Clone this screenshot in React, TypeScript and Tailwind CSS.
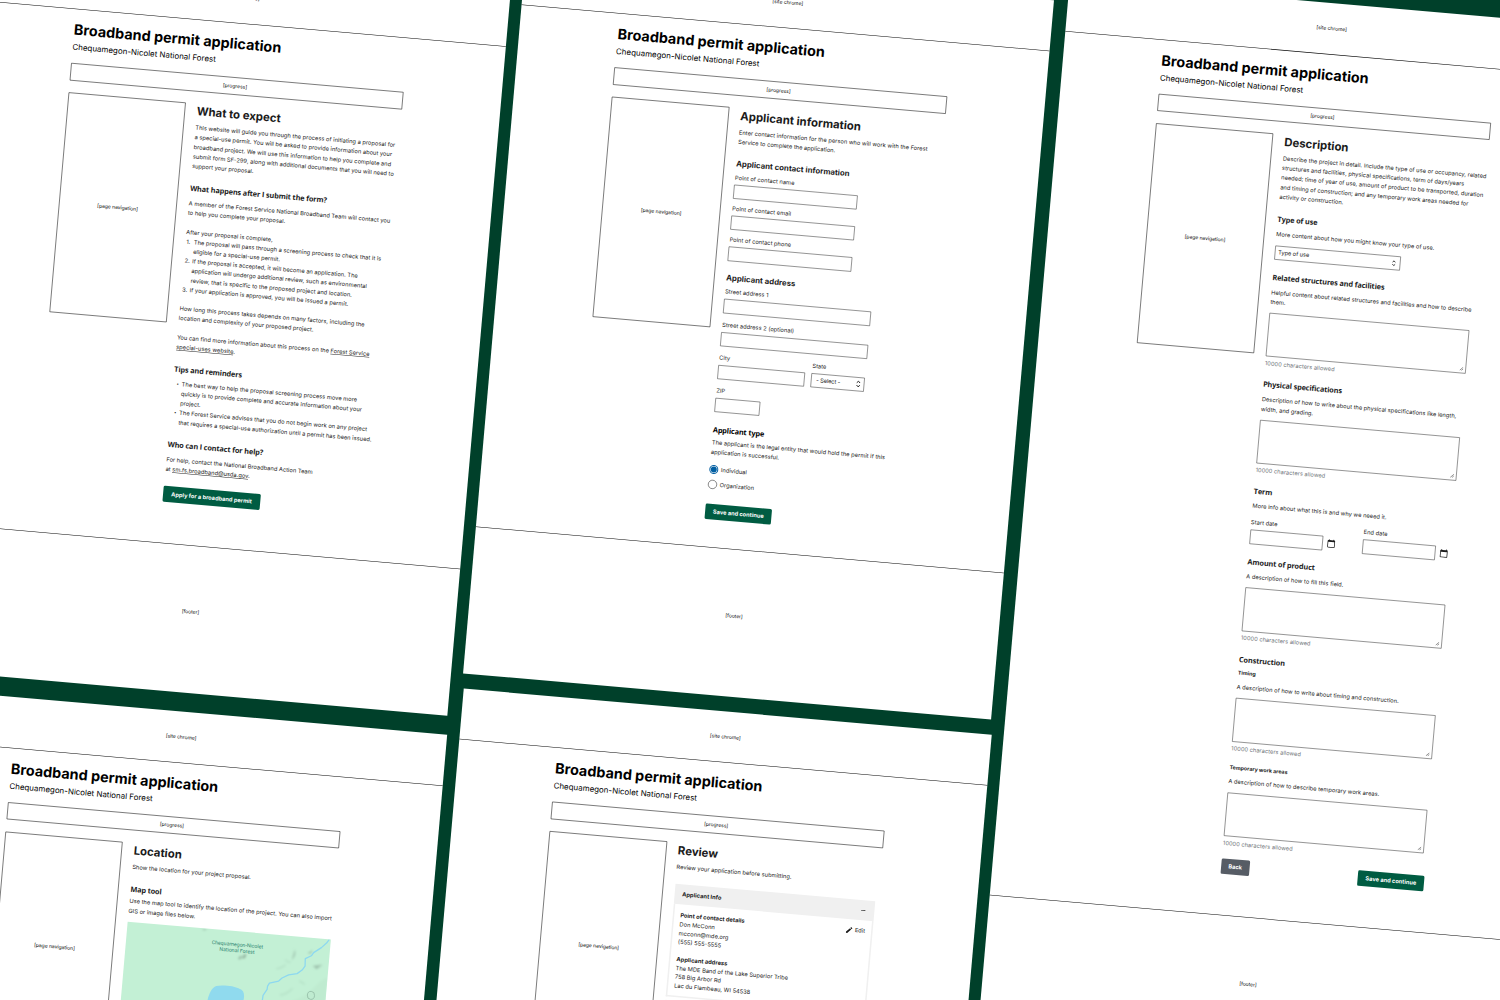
import type { ReactNode } from "react";
import { MdCalendarToday, MdEdit, MdRemove } from "react-icons/md";

function Board({ title, className = "", mainClass = "", children }: { title: string; className?: string; mainClass?: string; children: ReactNode }) {
  return (
    <section className={`w-[1060px] shrink-0 bg-white ${className}`}>
      <div className="flex h-[102.8px] items-center justify-center border-b border-black text-[9.9px] text-black">[site chrome]</div>
      <main className={`flex flex-col px-[196.4px] pt-[25.1px] ${mainClass}`}>
        <h1 className="text-[28.8px] leading-[32px] font-bold text-black">Broadband permit application</h1>
        <p className="mt-[8.7px] text-[15.9px] leading-[20px] text-black">Chequamegon-Nicolet National Forest</p>
        <div className="mt-[22px] flex h-[34.8px] shrink-0 items-center justify-center border border-black pr-[6px] text-[9.9px] text-black">[progress]</div>
        <div className="mt-[24.2px] flex items-start gap-[23.4px]">
          <nav className="flex h-[441.6px] w-[235.6px] shrink-0 items-center justify-center border border-black text-[9.9px] text-black">[page navigation]</nav>
          <div className="flex w-[407.4px] shrink-0 flex-col items-start pt-[3.4px] whitespace-nowrap">
            <h2 className="text-[22.8px] leading-[24px] font-bold">{title}</h2>
            {children}
          </div>
        </div>
      </main>
      <footer className="flex h-[294.6px] justify-center border-t border-black pt-[123.4px] text-[9.9px] leading-[16px] text-black">[footer]</footer>
    </section>
  );
}

function Heading({ className, children }: { className: string; children: ReactNode }) {
  return <h3 className={`font-['Open_Sans',sans-serif] text-[14.7px] leading-[20px] font-bold tracking-[-0.28px] ${className}`}>{children}</h3>;
}

function Button({ className, children }: { className: string; children: ReactNode }) {
  return (
    <button className={`flex h-[31.6px] shrink-0 items-center justify-center rounded-[3px] text-[11.3px] font-bold text-white ${className}`}>{children}</button>
  );
}

function Field({ label, className, boxClass }: { label: string; className: string; boxClass: string }) {
  return (
    <div className={className}>
      <div className="leading-[10px]">{label}</div>
      <div className={`h-[28.6px] border border-[#333] ${boxClass}`} />
    </div>
  );
}

function Chevrons({ className }: { className: string }) {
  return (
    <svg viewBox="0 0 10 16" className={className} fill="none" stroke="#1b1b1b" strokeWidth="2">
      <path d="M1.5 5.5 5 2l3.5 3.5M1.5 10.5 5 14l3.5-3.5" />
    </svg>
  );
}

function TextArea({ className }: { className: string }) {
  return (
    <div className={`shrink-0 ${className}`}>
      <div className="flex h-[87.6px] w-[401.6px] items-end justify-end border border-[#333] p-[4px]">
        <svg viewBox="0 0 8 8" className="size-[8px]" stroke="#333" strokeWidth="1" fill="none">
          <path d="M0.5 7.5l7-7M4 7.5 7.5 4" />
        </svg>
      </div>
      <div className="mt-[8.4px] leading-[10px] text-[#71767a]">10000 characters allowed</div>
    </div>
  );
}

function DateField({ label }: { label: string }) {
  return (
    <div>
      <div className="leading-[10px]">{label}</div>
      <div className="mt-[10.4px] flex items-center gap-[8px]">
        <div className="h-[28.6px] w-[146px] border border-[#333]" />
        <MdCalendarToday className="size-[18px]" />
      </div>
    </div>
  );
}

function Radio({ label, checked, className }: { label: string; checked?: boolean; className: string }) {
  return (
    <div className={`flex items-center gap-[5px] leading-[18px] ${className}`}>
      <span className={`flex size-[18px] items-center justify-center rounded-full ${checked ? "border-2 border-[#005ea2]" : "border border-[#1b1b1b]"}`}>
        {checked && <span className="size-[12px] rounded-full bg-[#005ea2]" />}
      </span>
      {label}
    </div>
  );
}

function WhatToExpect() {
  return (
    <Board title="What to expect" mainClass="h-[1048px]">
      <p className="mt-[12px]">
        This website will guide you through the process of initiating a proposal for<br />
        a special-use permit. You will be asked to provide information about your<br />
        broadband project. We will use this information to help you complete and<br />
        submit form SF-299, along with additional documents that you will need to<br />
        support your proposal.
      </p>
      <Heading className="mt-[23.6px]">What happens after I submit the form?</Heading>
      <p className="mt-[12.2px]">
        A member of the Forest Service National Broadband Team will contact you<br />
        to help you complete your proposal.
      </p>
      <p className="mt-[19.2px]">After your proposal is complete,</p>
      <ol className="pl-[2px]">
        {[
          <>The proposal will pass through a screening process to check that it is<br />eligible for a special-use permit.</>,
          <>If the proposal is accepted, it will become an application. The<br />application will undergo additional review, such as environmental<br />review, that is specific to the proposed project and location.</>,
          <>If your application is approved, you will be issued a permit.</>,
        ].map((item, i) => (
          <li key={i} className="flex">
            <span className="w-[15px] shrink-0">{i + 1}.</span>
            <span>{item}</span>
          </li>
        ))}
      </ol>
      <p className="mt-[19.2px]">
        How long this process takes depends on many factors, including the<br />
        location and complexity of your proposed project.
      </p>
      <p className="mt-[19.2px]">
        You can find more information about this process on the <a className="underline decoration-1 underline-offset-2">Forest Service<br />
        special-uses website</a>.
      </p>
      <Heading className="mt-[24.2px]">Tips and reminders</Heading>
      <ul className="mt-[10.4px] pl-[7px]">
        {[
          <>The best way to help the proposal screening process move more<br />quickly is to provide complete and accurate information about your<br />project.</>,
          <>The Forest Service advises that you do not begin work on any project<br />that requires a special-use authorization until a permit has been issued.</>,
        ].map((item, i) => (
          <li key={i} className="flex">
            <span className="w-[10.5px] shrink-0 text-[8px]">•</span>
            <span>{item}</span>
          </li>
        ))}
      </ul>
      <Heading className="mt-[24.4px]">Who can I contact for help?</Heading>
      <p className="mt-[11.8px]">
        For help, contact the National Broadband Action Team<br />
        at <a className="underline decoration-1 underline-offset-2">sm.fs.broadband@usda.gov</a>.
      </p>
      <Button className="mt-[24px] -ml-[1px] w-[195.2px] bg-[#005c42]">Apply for a broadband permit</Button>
    </Board>
  );
}

function ApplicantInformation() {
  return (
    <Board title="Applicant information" mainClass="h-[1047px]">
      <p className="mt-[12px]">
        Enter contact information for the person who will work with the Forest<br />
        Service to complete the application.
      </p>
      <h3 className="mt-[24px] text-[15.6px] leading-[20px] font-bold">Applicant contact information</h3>
      <Field label="Point of contact name" className="mt-[12.6px]" boxClass="mt-[9px] w-[248px]" />
      <Field label="Point of contact email" className="mt-[14.6px]" boxClass="mt-[9px] w-[248px]" />
      <Field label="Point of contact phone" className="mt-[14.6px]" boxClass="mt-[9px] w-[248px]" />
      <h3 className="mt-[24px] text-[15.6px] leading-[20px] font-bold">Applicant address</h3>
      <Field label="Street address 1" className="mt-[12.8px]" boxClass="mt-[10px] w-[294.6px]" />
      <Field label="Street address 2 (optional)" className="mt-[17.6px]" boxClass="mt-[10px] w-[294.6px]" />
      <div className="mt-[17.6px] flex gap-[13px]">
        <Field label="City" className="" boxClass="mt-[10px] w-[174px]" />
        <div>
          <div className="leading-[10px]">State</div>
          <div className="mt-[10px] flex h-[28.6px] w-[107px] items-center justify-between border border-[#333] pr-[6px] pl-[9px]">
            <span className="tracking-[-0.3px]">- Select -</span>
            <Chevrons className="h-[15px] w-[10px]" />
          </div>
        </div>
      </div>
      <Field label="ZIP" className="mt-[17.6px]" boxClass="mt-[10px] w-[89.6px]" />
      <Heading className="mt-[24.6px] text-black">Applicant type</Heading>
      <p className="mt-[6.6px]">
        The applicant is the legal entity that would hold the permit if this<br />
        application is successful.
      </p>
      <Radio label="Individual" checked className="mt-[16px]" />
      <Radio label="Organization" className="mt-[12.2px]" />
      <Button className="mt-[29.4px] -ml-[1px] w-[132.6px] bg-[#005c42]">Save and continue</Button>
    </Board>
  );
}

function Description() {
  return (
    <Board title="Description" mainClass="h-[1733.6px]">
      <p className="mt-[12px]">
        Describe the project in detail. Include the type of use or occupancy, related<br />
        structures and facilities, physical specifications, term of days/years<br />
        needed; time of year of use, amount of product to be transported, duration<br />
        and timing of construction; and any temporary work areas needed for<br />
        activity or construction.
      </p>
      <Heading className="mt-[24.2px]">Type of use</Heading>
      <p className="mt-[12px]">More content about how you might know your type of use.</p>
      <div className="mt-[12.4px] flex h-[28.6px] w-[252px] items-center justify-between border border-[#333] pr-[8px] pl-[6px]">
        <span className="tracking-[-0.15px]">Type of use</span>
        <Chevrons className="h-[13px] w-[8px]" />
      </div>
      <Heading className="mt-[24.2px]">Related structures and facilities</Heading>
      <p className="mt-[12.6px]">
        Helpful content about related structures and facilities and how to describe<br />
        them.
      </p>
      <TextArea className="mt-[11px]" />
      <Heading className="mt-[26.6px]">Physical specifications</Heading>
      <p className="mt-[12.2px]">
        Description of how to write about the physical specifications like length,<br />
        width, and grading.
      </p>
      <TextArea className="mt-[11.8px]" />
      <Heading className="mt-[27px]">Term</Heading>
      <p className="mt-[10.6px]">More info about what this is and why we neeed it.</p>
      <div className="mt-[17.4px] flex gap-[54.2px]">
        <DateField label="Start date" />
        <DateField label="End date" />
      </div>
      <Heading className="mt-[25.2px]">Amount of product</Heading>
      <p className="mt-[10.8px]">A description of how to fill this field.</p>
      <TextArea className="mt-[12.4px]" />
      <Heading className="mt-[27.6px]">Construction</Heading>
      <h4 className="mt-[13.6px] text-[10.6px] leading-[10px] font-bold">Timing</h4>
      <p className="mt-[13.8px]">A description of how to write about timing and construction.</p>
      <TextArea className="mt-[11.6px]" />
      <h4 className="mt-[28.6px] text-[10.6px] leading-[10px] font-bold">Temporary work areas</h4>
      <p className="mt-[13.6px]">A description of how to describe temporary work areas.</p>
      <TextArea className="mt-[12.2px]" />
      <div className="mt-[26px] flex w-full justify-between">
        <Button className="w-[57.2px] bg-[#565c65]">Back</Button>
        <Button className="w-[132.6px] bg-[#005c42]">Save and continue</Button>
      </div>
    </Board>
  );
}

function ForestMap() {
  return (
    <div className="relative mt-[12px] h-[264px] w-[408px] overflow-hidden bg-[#c3f0d5]">
      <svg viewBox="0 0 204 132" className="size-full" fill="none">
        <defs>
          <filter id="soft" x="-50%" y="-50%" width="200%" height="200%">
            <feGaussianBlur stdDeviation="0.8" />
          </filter>
        </defs>
        <g filter="url(#soft)">
          <path d="M140 95C150 78 160 70 176 62S192 44 204 38V132H130Z" fill="#bfebd0" />
          <path d="M75 1l5-1-3 2ZM113 27l3-3 1 1-2 3ZM117 26l3-5 1 3-2 3Z" fill="#8fb09c" />
          <path d="M169 13q2 6-2 11 1-6 2-11ZM182 16l5-4-2 4ZM188 28l10-2-6 5q-1-2-4-3Z" fill="#9cc0ac" />
          <path d="M152 34q6-1 9-5M160 24q3 3 6 2M176 44l6 3M158 60q8-2 12-8" stroke="#b6e2c8" strokeWidth="1.4" />
        </g>
        <ellipse cx="189" cy="57.5" rx="3.6" ry="4" stroke="#94bba6" strokeWidth="0.8" />
        <path d="M93.7 56.4C98 55 105 55 109.6 55.3C114 56 119 57 121 59.4C124 64 122 72 119 78L86 78C86 72 87 60 93.7 56.4Z" fill="#90daee" />
        <path d="M202.5 0L200 4L195.3 9L188 14.7L186 18L180.2 21.4L180.6 28.8L178 33L173.3 37L165 39L158.7 42.7L155.6 46L146.6 48.9L145 52L144.8 55.3L141.3 61.6L141 67L143 74" stroke="#8dd8f0" strokeWidth="1.3" strokeLinejoin="round" />
      </svg>
      <p className="absolute top-[21px] left-[163px] w-[120px] text-center font-['Roboto',sans-serif] text-[10.4px] leading-[12.4px] text-[#2f8572]">
        Chequamegon-Nicolet<br />National Forest
      </p>
    </div>
  );
}

function Location() {
  return (
    <Board title="Location" className="ml-[3.2px]" mainClass="h-[1733px]">
      <p className="mt-[12px]">Show the location for your project proposal.</p>
      <Heading className="mt-[23.6px]">Map tool</Heading>
      <p className="mt-[5.6px]">
        Use the map tool to identify the location of the project. You can also import<br />
        GIS or image files below.
      </p>
      <ForestMap />
    </Board>
  );
}

function Review() {
  return (
    <Board title="Review" className="ml-[3.6px]" mainClass="h-[1733px]">
      <p className="mt-[12px]">Review your application before submitting.</p>
      <div className="mt-[24.4px] ml-px w-[400.8px]">
        <div className="flex h-[40px] items-center justify-between bg-[#f0f0f0] px-[15px] font-bold">
          Applicant Info
          <MdRemove className="size-[15px]" />
        </div>
        <div className="relative h-[185.4px] border-x-[3px] border-b-[3px] border-[#f0f0f0] pt-[14.2px] pl-[12px] leading-[17.6px]">
          <h4 className="font-bold">Point of contact details</h4>
          <p>Don McConn</p>
          <p>mcconn@mde.org</p>
          <p>(555) 555-5555</p>
          <h4 className="mt-[17.6px] font-bold">Applicant address</h4>
          <p>The MDE Band of the Lake Superior Tribe</p>
          <p>758 Big Arbor Rd</p>
          <p>Lac du Flambeau, WI 54538</p>
          <button className="absolute top-[13px] right-[12px] flex items-center gap-[3px]">
            <MdEdit className="size-[16px]" />
            Edit
          </button>
        </div>
        <div className="mt-[7px] h-[40px] bg-[#f0f0f0]" />
      </div>
    </Board>
  );
}

export default function App() {
  return (
    <div className="h-[1000px] w-[1500px] overflow-hidden bg-[#00402a] font-['Inter',sans-serif] text-[11.5px] leading-[19.2px] text-[#1b1b1b]">
      <div className="flex origin-top-left scale-50 rotate-[5deg]">
        <div className="-mt-[226px] -ml-[43.8px] flex items-start">
          <div className="mt-[128.2px] flex w-[1060px] shrink-0 flex-col gap-[38.4px]">
            <WhatToExpect />
            <Location />
          </div>
          <div className="mt-[42.6px] ml-[23.8px] flex w-[1060px] shrink-0 flex-col gap-[29.6px]">
            <ApplicantInformation />
            <Review />
          </div>
          <div className="ml-[28.2px]">
            <Description />
          </div>
        </div>
      </div>
    </div>
  );
}
